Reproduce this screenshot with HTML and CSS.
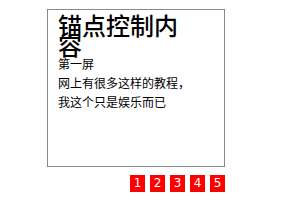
FILE: index.html
```html
<!DOCTYPE html>
<html lang="zh-CN">
<head>
    <meta charset="UTF-8">
    <title>锚点控制内容</title>
    <link rel="stylesheet" href="styles.css">
</head>
<body>
    <div class="wrap">
        <div class="box">
            <div class="screen">
                <h1>锚点控制内容</h1>
                <div class="title">第一屏</div>
                <p>网上有很多这样的教程，我这个只是娱乐而已</p>
            </div>
        </div>
        <div class="nav">
            <a href="#s1">1</a>
            <a href="#s2">2</a>
            <a href="#s3">3</a>
            <a href="#s4">4</a>
            <a href="#s5">5</a>
        </div>
    </div>
</body>
</html>
```

FILE: styles.css
```css
body {
    margin: 0;
    background: #fff;
    font-family: "Noto Sans CJK SC", "Noto Sans", sans-serif;
    color: #000;
}
.wrap {
    width: 178px;
    margin: 9px 0 0 47px;
}
.box {
    box-sizing: border-box;
    width: 178px;
    height: 158px;
    border: 1px solid #8a8a8a;
    overflow: hidden;
}
.screen {
    width: 138px;
    padding: 5px 0 0 10px;
}
h1 {
    margin: 0;
    font-size: 24px;
    font-weight: 500;
    line-height: 20px;
    font-family: "Noto Sans CJK SC", serif;
}
.title {
    font-size: 12px;
    line-height: 18px;
}
p {
    margin: 0;
    font-size: 12px;
    line-height: 19px;
}
.nav {
    display: flex;
    justify-content: flex-end;
    gap: 5px;
    margin-top: 8px;
}
.nav a {
    display: block;
    width: 15px;
    height: 17px;
    line-height: 17px;
    text-align: center;
    background: #f00;
    color: #fff;
    text-decoration: none;
    font-family: "DejaVu Sans", sans-serif;
    font-size: 12px;
}
```
